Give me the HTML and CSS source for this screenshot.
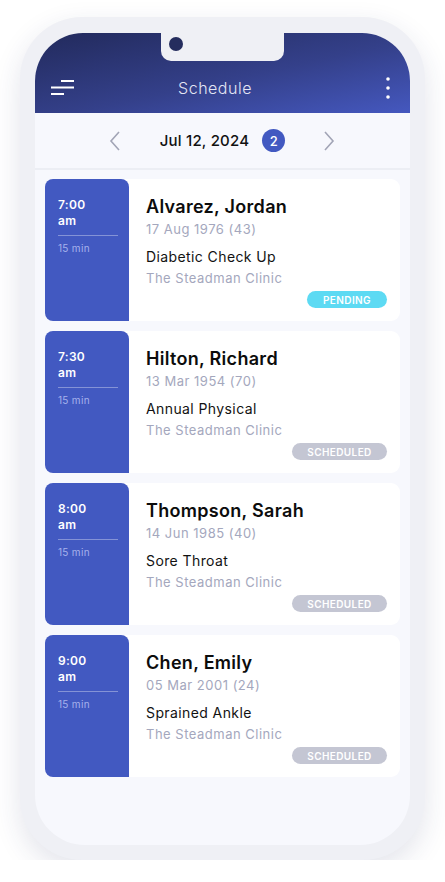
FILE: index.html
```html
<!DOCTYPE html>
<html lang="en">
<head>
    <meta charset="UTF-8">
    <title>Schedule</title>
    <link rel="stylesheet" href="styles.css">
</head>
<body>

<div class="phone">
    <div class="screen">
        <div class="notch"><span class="camera"></span></div>

        <div class="topbar">
            <svg class="menu-icon" width="24" height="16" viewBox="0 0 24 16">
                <rect x="10" y="0" width="13" height="2" fill="#fff"/>
                <rect x="0" y="6.5" width="23" height="2" fill="#fff"/>
                <rect x="0" y="13" width="13" height="2" fill="#fff"/>
            </svg>
            <div class="title">Schedule</div>
            <svg class="more-icon" width="6" height="22" viewBox="0 0 6 22">
                <circle cx="3" cy="2" r="1.8" fill="#fff"/>
                <circle cx="3" cy="11" r="1.8" fill="#fff"/>
                <circle cx="3" cy="20" r="1.8" fill="#fff"/>
            </svg>
        </div>

        <div class="datebar">
            <svg class="chev" width="12" height="20" viewBox="0 0 12 20">
                <polyline points="10,1 2,10 10,19" fill="none" stroke="#a2a5b6" stroke-width="1.6"/>
            </svg>
            <div class="date">Jul 12, 2024</div>
            <div class="count">2</div>
            <svg class="chev" width="12" height="20" viewBox="0 0 12 20">
                <polyline points="2,1 10,10 2,19" fill="none" stroke="#a2a5b6" stroke-width="1.6"/>
            </svg>
        </div>

        <div class="list">
            <div class="appt">
                <div class="time">
                    <div class="hour">7:00</div>
                    <div class="hour">am</div>
                    <div class="dur">15 min</div>
                </div>
                <div class="info">
                    <div class="name">Alvarez, Jordan</div>
                    <div class="muted">17 Aug 1976 (43)</div>
                    <div class="reason">Diabetic Check Up</div>
                    <div class="muted clinic">The Steadman Clinic</div>
                    <div class="status pending">PENDING</div>
                </div>
            </div>

            <div class="appt">
                <div class="time">
                    <div class="hour">7:30</div>
                    <div class="hour">am</div>
                    <div class="dur">15 min</div>
                </div>
                <div class="info">
                    <div class="name">Hilton, Richard</div>
                    <div class="muted">13 Mar 1954 (70)</div>
                    <div class="reason">Annual Physical</div>
                    <div class="muted clinic">The Steadman Clinic</div>
                    <div class="status">SCHEDULED</div>
                </div>
            </div>

            <div class="appt">
                <div class="time">
                    <div class="hour">8:00</div>
                    <div class="hour">am</div>
                    <div class="dur">15 min</div>
                </div>
                <div class="info">
                    <div class="name">Thompson, Sarah</div>
                    <div class="muted">14 Jun 1985 (40)</div>
                    <div class="reason">Sore Throat</div>
                    <div class="muted clinic">The Steadman Clinic</div>
                    <div class="status">SCHEDULED</div>
                </div>
            </div>

            <div class="appt">
                <div class="time">
                    <div class="hour">9:00</div>
                    <div class="hour">am</div>
                    <div class="dur">15 min</div>
                </div>
                <div class="info">
                    <div class="name">Chen, Emily</div>
                    <div class="muted">05 Mar 2001 (24)</div>
                    <div class="reason">Sprained Ankle</div>
                    <div class="muted clinic">The Steadman Clinic</div>
                    <div class="status">SCHEDULED</div>
                </div>
            </div>
        </div>
    </div>
</div>

</body>
</html>
```

FILE: styles.css
```css
body {
    margin: 0;
    background: #fff;
    font-family: "Inter", "Open Sans", sans-serif;
}

.phone {
    width: 375px;
    height: 812px;
    margin: 17px 0 0 20px;
    padding: 16px 15px 15px 15px;
    background: #eff0f5;
    border-radius: 62px;
    box-shadow: 0 10px 28px rgba(40, 50, 100, 0.13);
}

.screen {
    position: relative;
    height: 812px;
    background: #f7f8fd;
    border-radius: 48px 48px 50px 50px;
    overflow: hidden;
    display: flex;
    flex-direction: column;
}

.notch {
    position: absolute;
    top: 0;
    left: 126px;
    width: 123px;
    height: 28px;
    background: #eff0f5;
    border-radius: 0 0 10px 10px;
}

.camera {
    position: absolute;
    left: 8px;
    top: 4px;
    width: 14px;
    height: 14px;
    border-radius: 50%;
    background: #252d5e;
}

.topbar {
    height: 20px;
    padding: 45px 19px 15px 16px;
    background: linear-gradient(to bottom right, #222a5c 0%, #34408a 55%, #4558bf 100%);
    display: flex;
    align-items: center;
    justify-content: space-between;
}

.title {
    color: #e4e6f4;
    font-size: 16px;
    font-weight: 300;
    letter-spacing: 0.5px;
    margin-right: 30px;
}

.datebar {
    height: 55px;
    border-bottom: 2px solid #eceef4;
    display: flex;
    align-items: center;
    justify-content: center;
}

.chev {
    margin: 0 39px 0 38px;
}

.date {
    font-size: 15px;
    font-weight: 500;
    color: #111;
    letter-spacing: 0.2px;
}

.count {
    width: 23px;
    height: 23px;
    margin-left: 13px;
    border-radius: 50%;
    background: #4259c1;
    color: #fff;
    font-size: 13px;
    font-weight: 500;
    display: flex;
    align-items: center;
    justify-content: center;
}

.list {
    padding: 9px 10px;
    display: flex;
    flex-direction: column;
    gap: 10px;
}

.appt {
    height: 142px;
    background: #fff;
    border-radius: 9px;
    display: flex;
}

.time {
    width: 84px;
    padding: 0 11px 0 13px;
    box-sizing: border-box;
    background: #4259c1;
    border-radius: 8px 8px 0 8px;
    padding-top: 18px;
}

.hour {
    color: #fff;
    font-size: 12px;
    font-weight: 600;
    line-height: 16px;
    letter-spacing: 0.3px;
}

.dur {
    margin-top: 6px;
    padding-top: 6px;
    border-top: 1px solid rgba(255, 255, 255, 0.35);
    color: #a6b2ec;
    font-size: 10px;
    line-height: 13px;
    letter-spacing: 0.3px;
}

.info {
    flex: 1;
    padding: 16px 13px 0 17px;
    display: flex;
    flex-direction: column;
}

.name {
    font-size: 18px;
    font-weight: 600;
    color: #0c0c0c;
    line-height: 24px;
    letter-spacing: 0.3px;
}

.muted {
    font-size: 13px;
    color: #a4a7bd;
    line-height: 21px;
    letter-spacing: 0.5px;
}

.clinic {
    margin-top: 1px;
}

.reason {
    font-size: 14px;
    color: #121212;
    line-height: 20px;
    margin-top: 7px;
    letter-spacing: 0.4px;
}

.status {
    align-self: flex-end;
    width: 95px;
    height: 17px;
    margin-top: 2px;
    border-radius: 9px;
    background: #c4c6d3;
    color: #fff;
    font-size: 10px;
    font-weight: 600;
    letter-spacing: 0.4px;
    display: flex;
    align-items: center;
    justify-content: center;
}

.status.pending {
    width: 80px;
    background: #5ddaf3;
}
```
